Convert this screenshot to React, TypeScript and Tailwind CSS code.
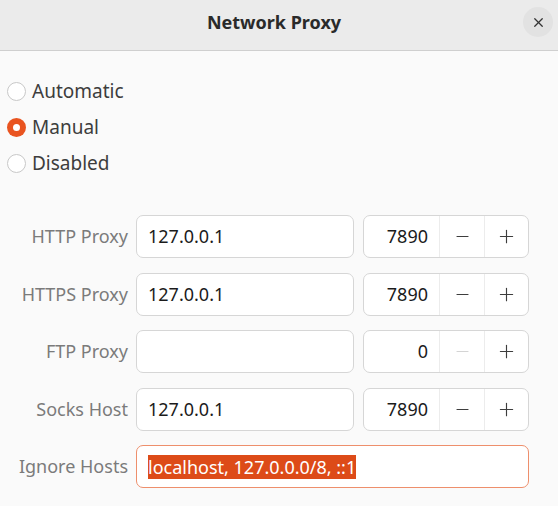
import { Minus, Plus, X } from "lucide-react";

const font = { fontFamily: '"Noto Sans", "Open Sans", sans-serif' };

const Radio = ({ label, checked }: { label: string; checked?: boolean }) => (
  <div className="flex h-9 items-center gap-[6px]">
    {checked ? (
      <span className="flex h-[19px] w-[19px] items-center justify-center rounded-full bg-[#e95420]">
        <span className="h-[7px] w-[7px] rounded-full bg-white" />
      </span>
    ) : (
      <span className="h-[19px] w-[19px] rounded-full border border-[#c8c8c8] bg-white" />
    )}
    <span className="text-[19px] text-[#3d3d3d]">{label}</span>
  </div>
);

const Port = ({ value, minusDisabled }: { value: string; minusDisabled?: boolean }) => (
  <div className="flex h-full w-[166px] rounded-[7px] border border-[#d6d6d6] bg-white">
    <div className="flex w-[75px] items-center justify-end pr-[11px] text-[18px] text-[#1b1b1b]">
      {value}
    </div>
    <div className="flex w-[45px] items-center justify-center border-l border-[#ececec]">
      <Minus
        size={19}
        strokeWidth={1.3}
        className={minusDisabled ? "text-[#d4d4d4]" : "text-[#3d3d3d]"}
      />
    </div>
    <div className="flex flex-1 items-center justify-center border-l border-[#ececec]">
      <Plus size={21} strokeWidth={1.3} className="text-[#3d3d3d]" />
    </div>
  </div>
);

const Row = ({ label, host, port, minusDisabled }: { label: string; host: string; port: string; minusDisabled?: boolean }) => (
  <div className="flex h-[43px] items-center">
    <div className="w-[128px] text-right text-[18px] text-[#7b7b7b]">{label}</div>
    <div className="ml-[8px] flex h-full w-[218px] items-center rounded-[7px] border border-[#d6d6d6] bg-white pl-[11px] text-[18px] text-[#1b1b1b]">
      {host}
    </div>
    <div className="ml-[9px] h-full">
      <Port value={port} minusDisabled={minusDisabled} />
    </div>
  </div>
);

export default function App() {
  return (
    <div className="h-[506px] w-[558px] overflow-hidden bg-[#fafafa]" style={font}>
      <div className="relative flex h-[51px] items-center justify-center border-b border-[#cfcfcf] bg-[#ebebeb] pb-[6px] pr-[10px]">
        <span className="text-[18px] font-bold text-[#2a2a2a]">Network Proxy</span>
        <button className="absolute right-[5px] top-[7px] flex h-[30px] w-[30px] items-center justify-center rounded-full bg-[#e2e2e2]">
          <X size={15} strokeWidth={2} className="text-[#333]" />
        </button>
      </div>

      <div className="flex flex-col pl-[7px] pt-[22px]">
        <Radio label="Automatic" />
        <Radio label="Manual" checked />
        <Radio label="Disabled" />
      </div>

      <div className="mt-[34px] flex flex-col gap-[14.5px]">
        <Row label="HTTP Proxy" host="127.0.0.1" port="7890" />
        <Row label="HTTPS Proxy" host="127.0.0.1" port="7890" />
        <Row label="FTP Proxy" host="" port="0" minusDisabled />
        <Row label="Socks Host" host="127.0.0.1" port="7890" />
        <div className="flex h-[43px] items-center">
          <div className="w-[128px] text-right text-[18px] text-[#7b7b7b]">Ignore Hosts</div>
          <div className="ml-[8px] flex h-full w-[393px] items-center rounded-[7px] border-[1.5px] border-[#ee8f6c] bg-white pl-[11px] text-[18px]">
            <span className="bg-[#dd4b18] leading-[24px] text-white">localhost, 127.0.0.0/8, ::1</span>
          </div>
        </div>
      </div>
    </div>
  );
}
